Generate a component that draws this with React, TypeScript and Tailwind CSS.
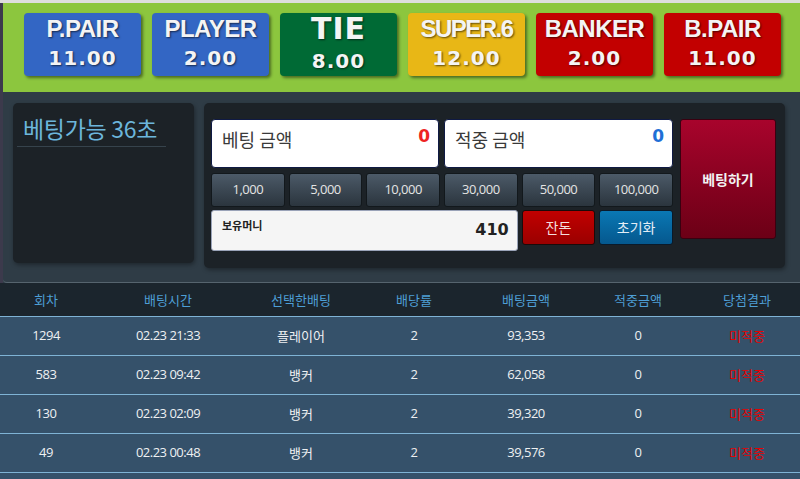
import React from 'react';

const odds = [
  { label: 'P.PAIR', value: '11.00', bg: 'bg-[#3366c4]', big: false },
  { label: 'PLAYER', value: '2.00', bg: 'bg-[#3366c4]', big: false },
  { label: 'TIE', value: '8.00', bg: 'bg-[#006a35]', big: true },
  { label: 'SUPER.6', value: '12.00', bg: 'bg-[#e8b716]', big: false },
  { label: 'BANKER', value: '2.00', bg: 'bg-[#c20000]', big: false },
  { label: 'B.PAIR', value: '11.00', bg: 'bg-[#c20000]', big: false },
];

const chips = ['1,000', '5,000', '10,000', '30,000', '50,000', '100,000'];

const rows = [
  ['1294', '02.23 21:33', '플레이어', '2', '93,353', '0'],
  ['583', '02.23 09:42', '뱅커', '2', '62,058', '0'],
  ['130', '02.23 02:09', '뱅커', '2', '39,320', '0'],
  ['49', '02.23 00:48', '뱅커', '2', '39,576', '0'],
  ['', '', '', '', '', ''],
];

const headers = ['회차', '배팅시간', '선택한배팅', '배당률', '배팅금액', '적중금액', '당첨결과'];
const cols = 'grid grid-cols-[92px_152px_114px_112px_112px_112px_106px]';
const kr = "font-['Noto_Sans_CJK_KR','Noto_Sans',sans-serif]";

export default function App() {
  return (
    <div className={`w-[800px] h-[479px] overflow-hidden bg-[#2e3b45] ${kr}`}>
      <div className="h-[3px] bg-[#dedede]" />
      <div className="border-l-[3px] border-[#3c3a4c]">
        {/* odds bar */}
        <div className="h-[89px] bg-[#8cc63e] pl-[21px] pt-[10px] flex gap-[11px]">
          {odds.map((o) => (
            <div
              key={o.label}
              className={`w-[117px] h-[63px] rounded-[4px] ${o.bg} flex flex-col items-center shadow-[2px_2px_3px_rgba(0,0,0,0.45)] font-bold text-[#f4f4f4] [text-shadow:1px_1px_2px_rgba(0,0,0,0.6)]`}
            >
              {o.big ? (
                <div className="font-['DejaVu_Sans',sans-serif] text-[30px] leading-[34px] mt-[-1px] tracking-[1px]">{o.label}</div>
              ) : (
                <div className={`font-['Liberation_Sans',sans-serif] text-[24px] leading-[28px] mt-[2px] ${o.label === 'SUPER.6' ? 'tracking-[-1.5px]' : 'tracking-[-0.5px]'}`}>{o.label}</div>
              )}
              <div className="font-['DejaVu_Sans',sans-serif] text-[20px] leading-[24px] tracking-[1px] mt-[3px]">{o.value}</div>
            </div>
          ))}
        </div>

        {/* bet panel */}
        <div className="h-[191px] bg-[#2f3c46] border-b border-[#56646e] rounded-bl-[4px] pl-[10px] pt-[11px] flex gap-[10px]">
          <div className="w-[181px] h-[160px] rounded-[5px] bg-[#1c2227] shadow-[1px_2px_4px_rgba(0,0,0,0.35)] px-[4px] pt-[11px]">
            <div className="text-[23px] leading-[28px] text-[#6cb6dc] pl-[6px] tracking-[-0.3px]">베팅가능 36초</div>
            <div className="mt-[4px] w-[149px] border-b border-[#36434c]" />
          </div>

          <div className="w-[581px] h-[165px] rounded-[5px] bg-[#1c2227] shadow-[1px_2px_4px_rgba(0,0,0,0.35)] pl-[7px] pt-[16px] flex gap-[7px]">
            <div className="w-[462px] flex flex-col">
              <div className="flex gap-[5px]">
                <div className="w-[228px] h-[49px] bg-white rounded-[4px] border border-[#0f1a44] relative pl-[10px] pt-[6px]">
                  <span className="text-[18px] leading-[27px] text-[#3a3a3a]">베팅 금액</span>
                  <span className="absolute right-[8px] top-[4px] text-[17px] font-bold text-[#ee2222] font-['DejaVu_Sans',sans-serif]">0</span>
                </div>
                <div className="w-[229px] h-[49px] bg-white rounded-[4px] border border-[#0f1a44] relative pl-[10px] pt-[6px]">
                  <span className="text-[18px] leading-[27px] text-[#3a3a3a]">적중 금액</span>
                  <span className="absolute right-[8px] top-[4px] text-[17px] font-bold text-[#1f6fd6] font-['DejaVu_Sans',sans-serif]">0</span>
                </div>
              </div>

              <div className="mt-[5px] grid grid-cols-6 gap-[4px]">
                {chips.map((c) => (
                  <div
                    key={c}
                    className="h-[34px] rounded-[3px] border border-[#12181c] bg-gradient-to-b from-[#4c5a68] to-[#2b353e] flex items-center justify-center text-[13px] text-[#e4e4e4] font-['Open_Sans',sans-serif] tracking-[-0.5px]"
                  >
                    {c}
                  </div>
                ))}
              </div>

              <div className="mt-[3px] grid grid-cols-6 gap-[4px]">
                <div className="col-span-4 h-[41px] rounded-[3px] bg-[#f5f5f5] border border-[#9aa3b8] relative">
                  <span className="absolute left-[10px] top-[6px] text-[11px] font-bold text-[#222]">보유머니</span>
                  <span className="absolute right-[8px] top-[7px] text-[16px] font-bold text-[#222] font-['DejaVu_Sans',sans-serif]">410</span>
                </div>
                <div className="h-[35px] rounded-[3px] border border-[#1a0a0a] bg-gradient-to-b from-[#c20000] to-[#9a0000] flex items-center justify-center text-[14px] text-[#f4dede]">
                  잔돈
                </div>
                <div className="h-[35px] rounded-[3px] border border-[#0a1a2a] bg-gradient-to-b from-[#0a78b4] to-[#05588e] flex items-center justify-center text-[14px] text-[#e4eef6]">
                  초기화
                </div>
              </div>
            </div>

            <div className="w-[96px] h-[120px] rounded-[3px] border border-[#3a0010] bg-gradient-to-b from-[#a8042c] to-[#6c0016] flex items-center justify-center text-[14px] font-bold text-[#f2f2f2]">
              베팅하기
            </div>
          </div>
        </div>
      </div>

      {/* history table */}
      <div className={`${cols} h-[34px] bg-[#1b252d] border-b border-[#7fb3d5] items-center text-[13px] text-[#4e9fd6] text-center`}>
        {headers.map((h) => (
          <div key={h}>{h}</div>
        ))}
      </div>
      {rows.map((r, i) => (
        <div
          key={i}
          className={`${cols} h-[39px] bg-[#35516a] border-b border-[#7fb3d5] items-center text-[13px] text-[#eef0f2] text-center`}
        >
          {r.map((c, j) => (
            <div key={j} className={j === 2 ? '' : "font-['Open_Sans',sans-serif] tracking-[-0.5px]"}>
              {c}
            </div>
          ))}
          <div className="text-[#e80000]">{r[0] ? '미적중' : ''}</div>
        </div>
      ))}
    </div>
  );
}
